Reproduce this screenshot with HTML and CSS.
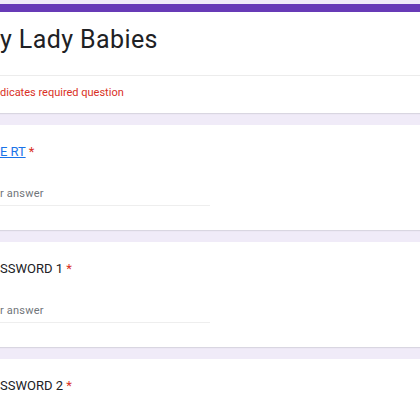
FILE: index.html
```html
<!DOCTYPE html>
<html>
<head>
<meta charset="utf-8">
<link rel="stylesheet" href="styles.css">
</head>
<body>
<div class="form">
  <div class="card header-card">
    <div class="header-main">
      <div class="form-title">y Lady Babies</div>
    </div>
    <div class="header-note">dicates required question</div>
  </div>
  <div class="card question">
    <div class="q-title"><a class="q-link" href="#">E RT</a> <span class="req">*</span></div>
    <div class="answer"><span class="placeholder">r answer</span></div>
  </div>
  <div class="card question">
    <div class="q-title">SSWORD 1 <span class="req">*</span></div>
    <div class="answer"><span class="placeholder">r answer</span></div>
  </div>
  <div class="card question last">
    <div class="q-title">SSWORD 2 <span class="req">*</span></div>
  </div>
</div>
</body>
</html>
```
FILE: styles.css
```css
html, body {
  margin: 0;
  padding: 0;
  background: #f0ebf8;
  height: 420px;
  overflow: hidden;
}
.form {
  display: flex;
  flex-direction: column;
  gap: 12px;
  padding-top: 4px;
  font-family: Roboto, "Liberation Sans", sans-serif;
}
.card {
  background: #ffffff;
  box-shadow: 0 1px 1px rgba(60, 64, 67, 0.12);
}
.header-card {
  border-top: 8px solid #673ab7;
}
.header-main {
  padding: 12px 0 20px 0;
  border-bottom: 1px solid #ececec;
}
.form-title {
  font-size: 25px;
  line-height: 31px;
  color: #202124;
  letter-spacing: 0.4px;
}
.header-note {
  padding: 9px 0 12px 0;
  font-size: 11px;
  line-height: 16px;
  color: #d93025;
}
.question {
  padding: 17px 0 24px 0;
}
.question.last {
  height: 80px;
}
.q-title {
  font-size: 13px;
  line-height: 20px;
  color: #202124;
}
.q-link {
  color: #1a73e8;
  text-decoration: underline;
}
.req {
  color: #d93025;
}
.answer {
  margin-top: 24px;
  width: 210px;
  padding-bottom: 3px;
  border-bottom: 1px solid #eeeeee;
  font-size: 11px;
  line-height: 16px;
}
.placeholder {
  color: #70757a;
  letter-spacing: 0.2px;
}
```
